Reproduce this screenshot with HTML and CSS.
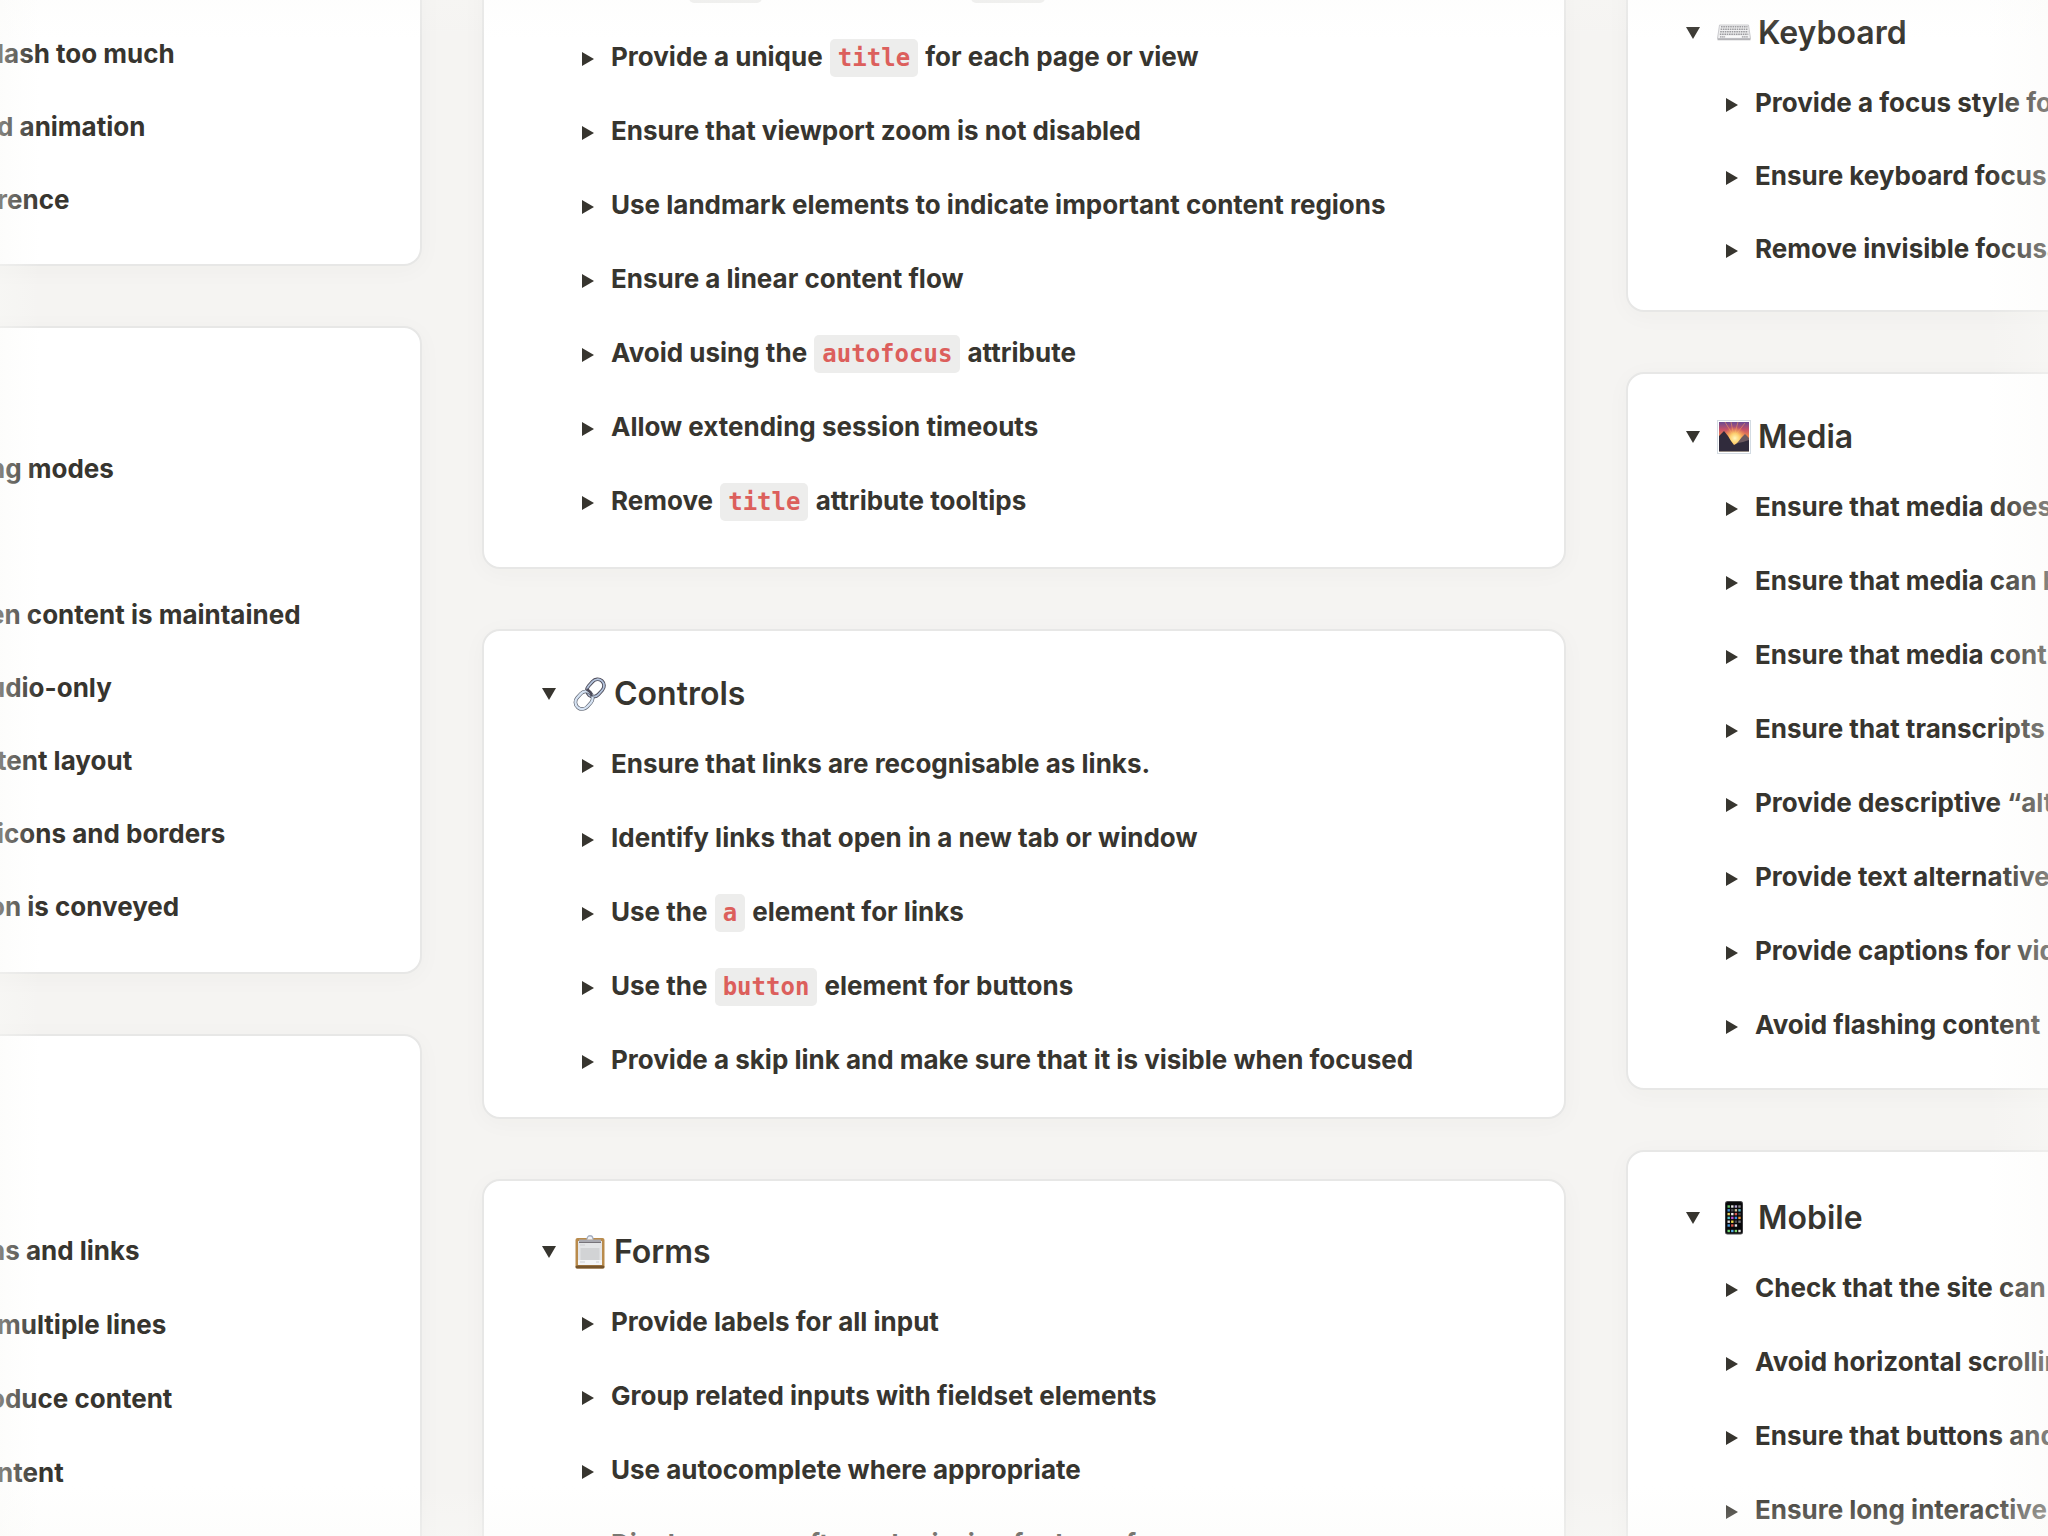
FILE: index.html
```html
<!DOCTYPE html>
<html lang="en">
<head>
<meta charset="utf-8">
<meta name="viewport" content="width=device-width, initial-scale=1">
<title>Accessibility checklist</title>
<link rel="stylesheet" href="styles.css">
</head>
<body>
<main class="board">
  <div class="column column-start">
    <section class="card card-motion">
      <ul class="checks compact">
        <li>lash too much</li>
        <li>d animation</li>
        <li>rence</li>
      </ul>
    </section>
    <section class="card card-appearance">
      <ul class="checks compact">
        <li class="cut">ng modes</li>
        <li></li>
        <li class="cut">en content is maintained</li>
        <li class="cut">udio-only</li>
        <li>tent layout</li>
        <li>icons and borders</li>
        <li class="cut">on is conveyed</li>
      </ul>
    </section>
    <section class="card card-content">
      <ul class="checks">
        <li class="cut">ns and links</li>
        <li>multiple lines</li>
        <li class="cut">oduce content</li>
        <li>ntent</li>
      </ul>
    </section>
  </div>

  <div class="column">
    <section class="card card-global">
      <details class="item"><summary>Use a <code>lang</code> attribute on the <code>html</code> element</summary></details>
      <details class="item"><summary>Provide a unique <code>title</code> for each page or view</summary></details>
      <details class="item"><summary>Ensure that viewport zoom is not disabled</summary></details>
      <details class="item"><summary>Use landmark elements to indicate important content regions</summary></details>
      <details class="item"><summary>Ensure a linear content flow</summary></details>
      <details class="item"><summary>Avoid using the <code>autofocus</code> attribute</summary></details>
      <details class="item"><summary>Allow extending session timeouts</summary></details>
      <details class="item"><summary>Remove <code>title</code> attribute tooltips</summary></details>
    </section>

    <details class="card card-controls" open>
      <summary class="heading">
        <svg class="icon" viewBox="0 0 34 34" aria-hidden="true">
          <g fill="none">
            <rect x="13" y="4.500" width="19" height="13" rx="6.500" transform="rotate(-48 22.500 11)" stroke="#4c4a58" stroke-width="3.600"/>
            <rect x="13" y="4.500" width="19" height="13" rx="6.500" transform="rotate(-48 22.500 11)" stroke="#b4c4dc" stroke-width="1.800"/>
            <rect x="1.500" y="16.500" width="19" height="13.500" rx="6.700" transform="rotate(-48 11 23.200)" stroke="#5b606c" stroke-width="3.600"/>
            <rect x="1.500" y="16.500" width="19" height="13.500" rx="6.700" transform="rotate(-48 11 23.200)" stroke="#d6e3f3" stroke-width="2.300"/>
            <path d="M13.500 12.500C16.500 13.500 18.500 16 18.800 19.500" stroke="#4c4a58" stroke-width="2.500"/>
          </g>
        </svg>
        <h2>Controls</h2>
      </summary>
      <details class="item"><summary>Ensure that links are recognisable as links.</summary></details>
      <details class="item"><summary>Identify links that open in a new tab or window</summary></details>
      <details class="item"><summary>Use the <code>a</code> element for links</summary></details>
      <details class="item"><summary>Use the <code>button</code> element for buttons</summary></details>
      <details class="item"><summary>Provide a skip link and make sure that it is visible when focused</summary></details>
    </details>

    <details class="card card-forms" open>
      <summary class="heading">
        <svg class="icon" viewBox="0 0 34 34" aria-hidden="true">
          <rect x="2.500" y="3" width="29" height="30.500" rx="2" fill="#b98b4c"/>
          <rect x="2.500" y="30.500" width="29" height="3" rx="1.500" fill="#76552c"/>
          <path d="M5 6h24v24H5z" fill="#e4e5e7"/>
          <path d="M5 25h24v5H5z" fill="#f4f5f6"/>
          <path d="M7 10h5M7 27h5M23 27h3" stroke="#cfd0d3" stroke-width="1"/>
          <rect x="7.500" y="13" width="19" height="12" fill="#d2d3d5"/>
          <path d="M6 4.500h22v3H6z" fill="#a9a9b0"/>
          <path d="M6 7.500h22" stroke="#77747a" stroke-width="1"/>
          <path d="M14 4.500c0-5 6-5 6 0" fill="#eef1f8" stroke="#a5afc2" stroke-width="1.300"/>
        </svg>
        <h2>Forms</h2>
      </summary>
      <details class="item"><summary>Provide labels for all input</summary></details>
      <details class="item"><summary>Group related inputs with fieldset elements</summary></details>
      <details class="item"><summary>Use autocomplete where appropriate</summary></details>
      <details class="item"><summary>Display errors after submission for large forms</summary></details>
    </details>
  </div>

  <div class="column">
    <details class="card card-keyboard" open>
      <summary class="heading">
        <svg class="icon" viewBox="0 0 34 34" aria-hidden="true">
          <path d="M2.500 9h29l2 13.500H.5z" fill="#f0f0f1" stroke="#bdbdc0" stroke-width=".8"/>
          <path d="M.5 22.500h33v1.700H.5z" fill="#b4b4b7"/>
          <g stroke="#98989c" stroke-width="1.600" stroke-dasharray="1.600 .7">
            <path d="M4 10.800h26.500M3.600 13.300h27M3.200 15.800h28M2.800 18.300h28.500"/>
          </g>
          <path d="M3 20.800h5M25 20.800h6" stroke="#98989c" stroke-width="1.200" stroke-dasharray="1.500 .6"/>
          <path d="M9 20.800h15" stroke="#fbfbfb" stroke-width="1.400"/>
        </svg>
        <h2>Keyboard</h2>
      </summary>
      <details class="item compact"><summary>Provide a focus style for</summary></details>
      <details class="item compact"><summary>Ensure keyboard focus</summary></details>
      <details class="item compact"><summary>Remove invisible focusable</summary></details>
    </details>

    <details class="card card-media" open>
      <summary class="heading">
        <svg class="icon" viewBox="0 0 34 34" aria-hidden="true">
          <defs>
            <linearGradient id="sky" x1="0" y1="0" x2="0" y2="1">
              <stop offset="0" stop-color="#6a4a93"/>
              <stop offset=".25" stop-color="#c4506a"/>
              <stop offset=".5" stop-color="#f08a4a"/>
              <stop offset="1" stop-color="#f3dc9a"/>
            </linearGradient>
            <radialGradient id="sun" cx=".53" cy=".55" r=".4">
              <stop offset="0" stop-color="#fff7c0"/>
              <stop offset=".4" stop-color="#ffd873" stop-opacity=".9"/>
              <stop offset="1" stop-color="#ff9a4a" stop-opacity="0"/>
            </radialGradient>
          </defs>
          <rect x=".5" y=".5" width="33" height="33" fill="#fff" stroke="#d3dbe2"/>
          <rect x="2" y="2" width="30" height="29.500" fill="url(#sky)"/>
          <path d="M17 17L8 2M17 17L14 2M17 17L21 2M17 17L28 3" stroke="#f0955c" stroke-width="1" opacity=".6"/>
          <rect x="2" y="2" width="30" height="29.500" fill="url(#sun)"/>
          <path d="M32 18l-4-4-3 3-4 5-3 3h14z" fill="#6d5a60"/>
          <path d="M2 16l5-5 4 5 3 5 3 4 4-2 5-1 6-2v11.500H2z" fill="#302b3c"/>
        </svg>
        <h2>Media</h2>
      </summary>
      <details class="item"><summary>Ensure that media doesn’t</summary></details>
      <details class="item"><summary>Ensure that media can be</summary></details>
      <details class="item"><summary>Ensure that media controls</summary></details>
      <details class="item"><summary>Ensure that transcripts</summary></details>
      <details class="item"><summary>Provide descriptive “alt”</summary></details>
      <details class="item"><summary>Provide text alternatives</summary></details>
      <details class="item"><summary>Provide captions for video</summary></details>
      <details class="item"><summary>Avoid flashing content</summary></details>
    </details>

    <details class="card card-mobile" open>
      <summary class="heading">
        <svg class="icon" viewBox="0 0 34 34" aria-hidden="true">
          <rect x="8" y="0" width="18" height="33.500" rx="2.500" fill="#454548"/>
          <rect x="8.800" y="1" width="16.400" height="31.500" rx="2" fill="#08080a"/>
          <g stroke-width="2.400" fill="none">
            <path d="M10.500 5.500h2.400" stroke="#67c96a"/><path d="M14.100 5.500h2.400" stroke="#e8e8e8"/><path d="M17.700 5.500h2.400" stroke="#b7a5d6"/><path d="M21.300 5.500h2.400" stroke="#8b8b90"/>
            <path d="M10.500 9.300h2.400" stroke="#3f8fd6"/><path d="M14.100 9.300h2.400" stroke="#4d4d55"/><path d="M17.700 9.300h2.400" stroke="#d9c9a0"/><path d="M21.300 9.300h2.400" stroke="#5bb7c9"/>
            <path d="M10.500 13.100h2.400" stroke="#e7d35a"/><path d="M14.100 13.100h2.400" stroke="#f0f0f0"/><path d="M17.700 13.100h2.400" stroke="#d95f55"/><path d="M21.300 13.100h2.400" stroke="#4a4a50"/>
            <path d="M10.500 16.900h2.400" stroke="#55c4c9"/><path d="M14.100 16.900h2.400" stroke="#c152d0"/><path d="M17.700 16.900h2.400" stroke="#3d86e0"/><path d="M21.300 16.900h2.400" stroke="#f09a37"/>
            <path d="M10.500 20.700h2.400" stroke="#dcdcdc"/><path d="M14.100 20.700h2.400" stroke="#f0d84a"/><path d="M17.700 20.700h2.400" stroke="#4a4a50"/><path d="M21.300 20.700h2.400" stroke="#77777c"/>
            <path d="M10.500 24.500h2.400" stroke="#4a9be0"/><path d="M14.100 24.500h2.400" stroke="#e0544c"/><path d="M17.700 24.500h2.400" stroke="#e8e8e8"/>
            <path d="M10.500 30h2.400" stroke="#6fd873"/><path d="M14.100 30h2.400" stroke="#5aaee8"/><path d="M17.700 30h2.400" stroke="#7bd66f"/><path d="M21.300 30h2.400" stroke="#e0e0e0"/>
          </g>
        </svg>
        <h2>Mobile</h2>
      </summary>
      <details class="item"><summary>Check that the site can</summary></details>
      <details class="item"><summary>Avoid horizontal scrolling</summary></details>
      <details class="item"><summary>Ensure that buttons and</summary></details>
      <details class="item"><summary>Ensure long interactive</summary></details>
    </details>
  </div>
</main>
</body>
</html>
```
FILE: styles.css
```css
:root {
  --ink: #37352f;
  --page: #f5f4f2;
  --line: #e7e7e6;
  --edge: 249, 249, 246;
}

* {
  box-sizing: border-box;
}

body {
  position: relative;
  height: 100vh;
  margin: 0;
  overflow: hidden;
  background: var(--page);
  color: var(--ink);
  font-family: Inter, "Liberation Sans", sans-serif;
  font-size: 26px;
  font-weight: 700;
  line-height: 36px;
}

/* Soft fade where the board runs off the window */
body::after {
  content: "";
  position: absolute;
  inset: 0;
  pointer-events: none;
  background:
    linear-gradient(to right, rgba(var(--edge), .4), rgba(var(--edge), 0) 40px),
    linear-gradient(to left, rgba(var(--edge), .4), rgba(var(--edge), 0) 60px),
    linear-gradient(to top, rgba(var(--edge), .35), rgba(var(--edge), 0) 50px),
    linear-gradient(to bottom, rgba(var(--edge), .2), rgba(var(--edge), 0) 40px);
}

.board {
  display: grid;
  grid-template-columns: repeat(3, minmax(0, 1fr));
  gap: 60px;
  margin: -60px -662px 0;
}

.column {
  display: flex;
  flex-direction: column;
  gap: 60px;
}

.card {
  padding: 43px 58px 28px;
  border: 2px solid var(--line);
  border-radius: 18px;
  background: #fff;
  box-shadow: 0 4px 24px rgba(55, 53, 47, .03);
  white-space: nowrap;
}

.card-motion { padding-top: 75px; }
.card-appearance { padding-top: 104px; padding-bottom: 29px; }
.card-content { padding-top: 178px; padding-bottom: 80px; }
.card-global { padding-top: 4px; padding-bottom: 29px; }
.card-controls { padding-bottom: 20px; }
.card-forms { padding-top: 51px; }
.card-keyboard { padding-top: 71px; padding-bottom: 25px; }
.card-media { padding-bottom: 26px; }
.card-mobile { padding-top: 46px; }

summary {
  display: flex;
  align-items: center;
  list-style: none;
  cursor: pointer;
}

summary::before {
  content: "";
  flex: none;
  background: var(--ink);
}

.heading {
  height: 40px;
  margin-bottom: 13px;
}

.heading::before {
  width: 14px;
  height: 12px;
  margin-right: 17px;
  clip-path: polygon(0 0, 100% 0, 50% 100%);
}

.heading h2 {
  margin: 0;
  font-size: 32px;
  font-weight: 600;
  line-height: 40px;
}

.icon {
  flex: none;
  width: 34px;
  height: 34px;
  margin-right: 7px;
}

.item {
  padding-left: 40px;
}

.item summary {
  display: block;
  height: 74px;
  padding: 19px 0;
}

.item.compact summary {
  height: 73px;
}

.item summary::before {
  display: inline-block;
  width: 12px;
  height: 14px;
  margin-right: 17px;
  clip-path: polygon(0 0, 100% 50%, 0 100%);
}

code {
  margin: 0 1px;
  padding: 5px 8px;
  border-radius: 5px;
  background: #ededec;
  color: #dc5f5c;
  font-family: "DejaVu Sans Mono", "Liberation Mono", monospace;
  font-size: 24px;
  font-weight: 700;
  line-height: 24px;
}

/* The first column hangs off the left edge of the window */
.column-start .card {
  padding-left: 657px;
}

.checks {
  margin: 0;
  padding: 0;
  list-style: none;
}

.checks li {
  height: 74px;
  padding: 19px 0;
}

.checks.compact li {
  height: 73px;
}

.checks .cut {
  margin-left: -8px;
}
```
